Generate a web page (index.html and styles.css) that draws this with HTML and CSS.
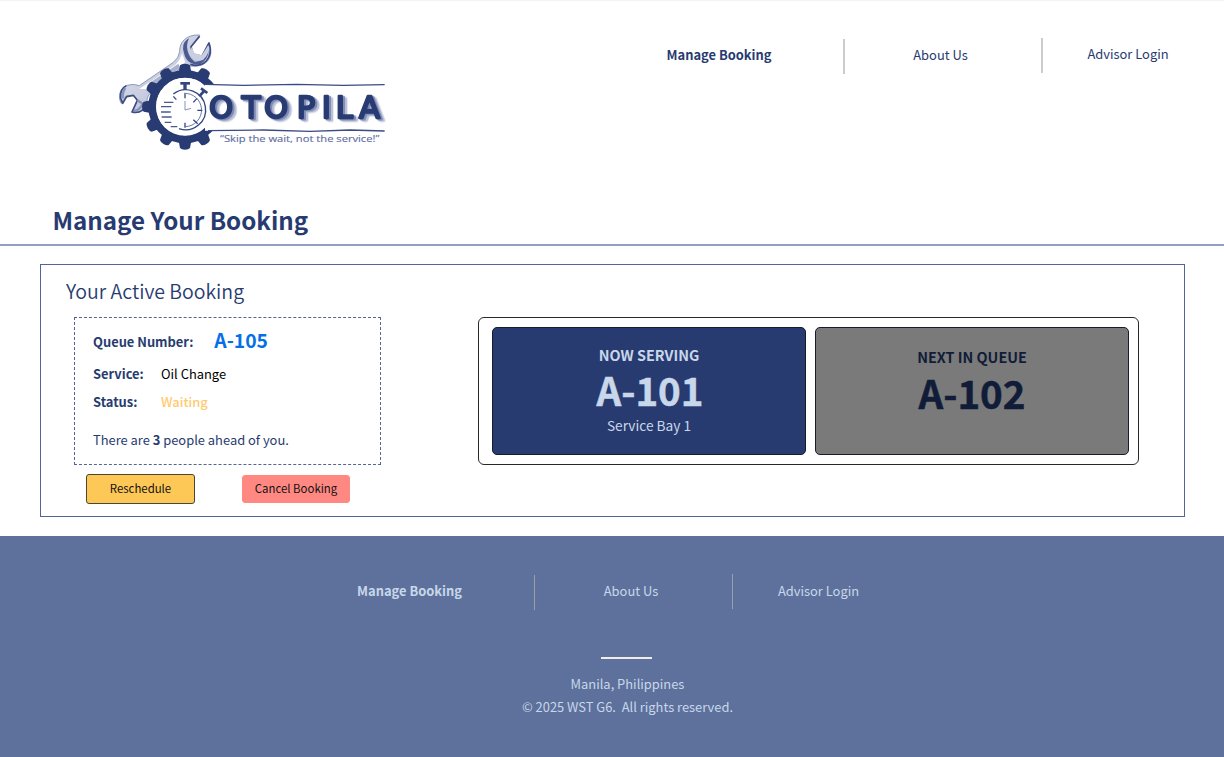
FILE: index.html
```html
<!DOCTYPE html>
<html lang="en">
<head>
<meta charset="utf-8">
<title>Otopila - Manage Your Booking</title>
<link rel="stylesheet" href="styles.css">
</head>
<body>
<header class="header">
  <svg class="logo" viewBox="0 0 855 405" role="img" aria-label="Otopila">
    <defs>
      <clipPath id="gearClip"><path d="M0 0H320V178H285V317H320V405H0Z"/></clipPath>
      <linearGradient id="steel" x1="0" y1="0" x2="1" y2="1">
        <stop offset="0" stop-color="#e6e9f2"/><stop offset=".5" stop-color="#c9cee0"/><stop offset="1" stop-color="#a3acca"/>
      </linearGradient>
    </defs>
    <path d="M88 182L190 112Q207 98 209 80C208 52 228 28 269 30L243 64L248 86L274 94L297 53C310 83 301 115 268 122C249 127 232 119 219 123L118 208Q110 218 109 242C101 258 86 266 66 261L82 226L70 211L48 213L34 235C22 216 29 190 51 181Q70 175 88 182Z" fill="url(#steel)" stroke="#8d98bb" stroke-width="3" stroke-linejoin="round"/>
    <path d="M88 192L196 119Q211 105 216 85L226 112L205 126L112 192Z" fill="#fff"/>
    <path d="M119 173L205 116L210 128L128 185Z" fill="#a7b0cc"/>
    <path d="M222 84Q213 57 232 43L237 40Q228 60 233 78Q238 98 254 110Q280 112 296 78Q292 108 268 119Q229 119 222 84Z" fill="#4c5b90"/>
    <path d="M269 34L243 65L249 87L276 94L297 54Q308 85 289 108Q270 127 241 118M49 182Q29 191 32 220L38 235L50 215L70 211L82 226L66 261Q96 268 108 240" fill="none" stroke="#3c4c84" stroke-width="5" stroke-linejoin="round"/>
    <path d="M246 65L252 84L275 91L295 60Q300 86 280 104Q262 112 247 96Q236 80 246 65Z" fill="#c9cfe1"/>
    <path d="M46 189Q36 203 39 220M82 226L98 236Q88 257 72 257" fill="none" stroke="#8893b9" stroke-width="7"/>
    <g clip-path="url(#gearClip)" fill="#283b73">
      <circle cx="225" cy="245" r="98" fill="none" stroke="#283b73" stroke-width="24"/>
      <g id="teeth">
        <path id="t" d="M206 142L210 121Q214 116 225 116Q236 116 240 121L244 142Z"/>
        <use href="#t" transform="rotate(30 225 245)"/><use href="#t" transform="rotate(150 225 245)"/>
        <use href="#t" transform="rotate(180 225 245)"/><use href="#t" transform="rotate(210 225 245)"/>
        <use href="#t" transform="rotate(240 225 245)"/><use href="#t" transform="rotate(270 225 245)"/>
        <use href="#t" transform="rotate(300 225 245)"/><use href="#t" transform="rotate(330 225 245)"/>
      </g>
    </g>
    <circle cx="225" cy="245" r="87" fill="#fff"/>
    <path d="M284 178L400 181L560 178L700 181L824 179M294 317L460 315L600 319L720 315L824 318" fill="none" stroke="#3a4b83" stroke-width="4"/>
    <g fill="none" stroke="#34467f">
      <path d="M190 207A60 60 0 1 1 207 311" stroke-width="4"/>
      <path d="M222 205A50 50 0 0 1 227 305" stroke-width="3" stroke="#6a78a6"/>
      <path d="M211 175H240" stroke-width="8"/><path d="M225 175V195" stroke-width="10"/>
      <path d="M273 190L292 204" stroke-width="8"/><path d="M282 198L268 214" stroke-width="8"/>
      <path d="M225 207V220M261 220L250 232M277 256H262M263 296L250 284M225 308V293M190 214L199 224" stroke-width="4"/>
      <path d="M225 228V255L243 250" stroke-width="3" stroke="#8993b8"/>
      <path d="M162 232H190M153 245H184M153 261H182M155 276H185M164 292H184M182 305H202" stroke-width="4" stroke="#4a5a90"/>
    </g>
    <text class="word" x="297 395 462 560 635 677 747" y="278">OTOPILA</text>
    <text class="tagline" x="330" y="350" textLength="478" lengthAdjust="spacingAndGlyphs">“Skip the wait, not the service!”</text>
  </svg>
  <nav class="nav">
    <a class="link active">Manage Booking</a>
    <i class="divider"></i>
    <a class="link about">About Us</a>
    <i class="divider raised"></i>
    <a class="link raised">Advisor Login</a>
  </nav>
</header>
<main>
  <h1 class="title">Manage Your Booking</h1>
  <section class="card">
    <div class="booking">
      <h2 class="subtitle">Your Active Booking</h2>
      <div class="details">
        <div class="row queue"><b>Queue Number:</b><strong class="number">A-105</strong></div>
        <div class="row"><b class="key">Service:</b><span class="value">Oil Change</span></div>
        <div class="row"><b class="key">Status:</b><span class="waiting">Waiting</span></div>
        <p class="ahead">There are <b>3</b> people ahead of you.</p>
      </div>
      <div class="actions">
        <button class="button reschedule">Reschedule</button>
        <button class="button cancel">Cancel Booking</button>
      </div>
    </div>
    <div class="board">
      <div class="panel serving">
        <div class="label">NOW SERVING</div>
        <div class="ticket">A-101</div>
        <div class="bay">Service Bay 1</div>
      </div>
      <div class="panel next">
        <div class="label">NEXT IN QUEUE</div>
        <div class="ticket">A-102</div>
      </div>
    </div>
  </section>
</main>
<footer class="footer">
  <nav class="nav foot-nav">
    <a class="link active">Manage Booking</a>
    <i class="divider"></i>
    <a class="link about">About Us</a>
    <i class="divider raised"></i>
    <a class="link">Advisor Login</a>
  </nav>
  <div class="rule"></div>
  <p class="legal">Manila, Philippines</p>
  <p class="legal">© 2025 WST G6.&nbsp; All rights reserved.</p>
</footer>
</body>
</html>
```

FILE: styles.css
```css
* { box-sizing: border-box; }
body {
  margin: 0;
  width: 1224px;
  height: 757px;
  overflow: hidden;
  background: #fff;
  color: #283b70;
  font: 12.9px/20px "Noto Sans CJK SC", "Open Sans", sans-serif;
}
h1, h2, p { margin: 0; }

.header {
  display: flex;
  height: 198px;
  padding: 24px 0 0 110px;
  border-top: 1px solid #f3f3f3;
}
.logo { width: 285px; height: 135px; flex: none; }
.word {
  font: 400 92px "DejaVu Sans", sans-serif;
  fill: #283b73;
  stroke: #283b73;
  stroke-width: 7px;
  stroke-linejoin: round;
  filter: drop-shadow(6px 4px 0 #7f8bb3) drop-shadow(7px 4px 1px #b9c0d7);
}
.tagline { font: 400 27px "Open Sans", sans-serif; fill: #5f6f9f; stroke: #5f6f9f; stroke-width: .4px; }

.nav {
  display: grid;
  grid-template-columns: 249px 1px 197px 1px 171px;
  align-content: start;
  justify-items: center;
}
.header .nav { margin-left: 199px; padding-top: 13px; }
.header .link { padding-left: 1px; }
.link { line-height: 34px; white-space: nowrap; }
.active { font-weight: 700; }
.about { margin-right: 5px; }
.divider { width: 2px; height: 35px; background: #ccc; margin-top: 1px; }
.divider.raised { margin-top: 0; }
.link.raised { margin-top: -1px; }

.title {
  height: 48px;
  padding-left: 52.5px;
  font-size: 24.15px;
  line-height: 44px;
  border-bottom: 2px solid #929fc0;
}
.card {
  display: flex;
  width: 1145px;
  height: 253px;
  margin: 18px 0 0 40px;
  padding: 12px 0 0 25px;
  border: 1px solid #536597;
}
.booking { width: 412px; }
.subtitle { font-size: 19.5px; font-weight: 350; line-height: 28px; margin-bottom: 12px; }
.details {
  width: 307px;
  height: 148px;
  margin-left: 8px;
  padding: 8px 0 0 18px;
  border: 1px dashed #536597;
}
.row { display: flex; height: 28px; align-items: center; }
.queue { height: 32px; gap: 21px; margin-bottom: 2px; }
.number { font-size: 19.3px; line-height: 28px; padding-bottom: 4px; color: #066fe8; }
.key { width: 68px; }
.value { color: #000; }
.waiting { color: #ffcb70; font-weight: 500; }
.ahead { margin-top: 14px; }
.actions { display: flex; gap: 47px; margin: 9px 0 0 20px; align-items: center; }
.button {
  height: 30px;
  width: 109px;
  padding: 0 0 3px;
  border: 1px solid #4b4632;
  border-radius: 3px;
  background: #fec857;
  color: #111;
  font: 11.4px/24px "Noto Sans CJK SC", sans-serif;
}
.button.cancel { width: 108px; height: 28px; border-color: #ff8982; background: #ff8982; }

.board {
  display: flex;
  gap: 9px;
  width: 661px;
  height: 148px;
  margin-top: 40px;
  padding: 9px 0 0 13px;
  border: 1px solid #282828;
  border-radius: 6px;
}
.panel {
  width: 314px;
  height: 128px;
  padding-top: 16px;
  border: 1px solid #171c2b;
  border-radius: 5px;
  text-align: center;
}
.serving { background: #283b70; color: #c8d7ea; }
.next { background: #7a7a7a; color: #101c38; padding-top: 18px; }
.label { font-size: 14.4px; font-weight: 700; line-height: 22px; }
.ticket { font-size: 38.5px; font-weight: 700; line-height: 48px; -webkit-text-stroke: .5px; }
.serving .ticket { line-height: 46px; padding: 0 0 2px 2px; }
.bay { font-size: 13.7px; line-height: 22px; }

.footer {
  height: 221px;
  margin-top: 19px;
  padding-top: 38px;
  background: #5d719c;
  color: #c8d7ea;
  text-align: center;
}
.foot-nav { margin-left: 285px; }
.foot-nav .divider { width: 1px; background: #999fa6; }
.rule { width: 51px; height: 2px; margin: 47px 0 0 601px; background: #f0eeea; }
.legal { width: 1255px; line-height: 23px; }
.rule + .legal { margin-top: 13px; }
```
